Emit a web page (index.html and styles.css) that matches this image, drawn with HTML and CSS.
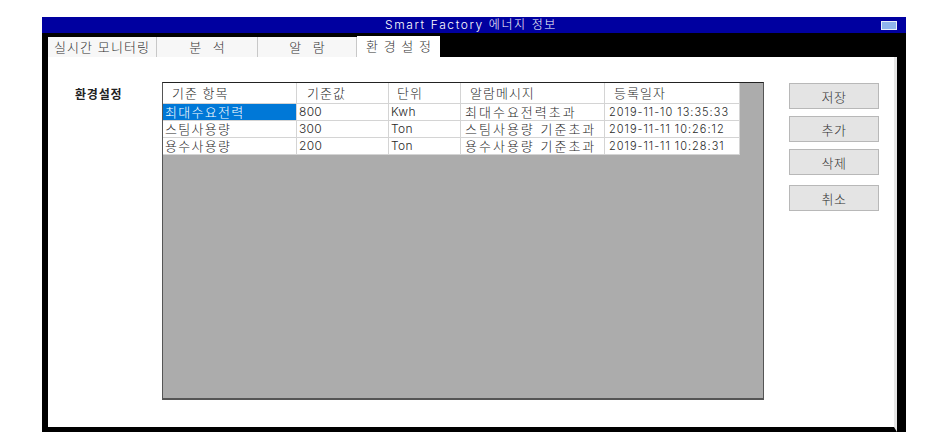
FILE: index.html
```html
<!DOCTYPE html>
<html lang="ko">
<head>
    <meta charset="UTF-8">
    <title>Smart Factory 에너지 정보</title>
    <link rel="stylesheet" href="styles.css">
</head>
<body>
    <div class="window">
        <div class="title-bar">
            <span></span>
            <span class="title">Smart Factory 에너지 정보</span>
            <span class="title-icon"><i></i></span>
        </div>
        <div class="tab-bar">
            <div class="tab tab-monitor">실시간 모니터링</div>
            <div class="tab tab-analysis">분 석</div>
            <div class="tab tab-alarm">알 람</div>
            <div class="tab tab-settings active">환 경 설 정</div>
        </div>
        <div class="content">
            <div class="section-label">환경설정</div>
            <div class="grid-box">
                <div class="grid-row header">
                    <div class="cell">기준 항목</div>
                    <div class="cell">기준값</div>
                    <div class="cell">단위</div>
                    <div class="cell">알람메시지</div>
                    <div class="cell">등록일자</div>
                </div>
                <div class="grid-row">
                    <div class="cell selected">최대수요전력</div>
                    <div class="cell num">800</div>
                    <div class="cell num">Kwh</div>
                    <div class="cell msg">최대수요전력초과</div>
                    <div class="cell date">2019-11-10 13:35:33</div>
                </div>
                <div class="grid-row">
                    <div class="cell">스팀사용량</div>
                    <div class="cell num">300</div>
                    <div class="cell num">Ton</div>
                    <div class="cell msg">스팀사용량 기준초과</div>
                    <div class="cell date">2019-11-11 10:26:12</div>
                </div>
                <div class="grid-row">
                    <div class="cell">용수사용량</div>
                    <div class="cell num">200</div>
                    <div class="cell num">Ton</div>
                    <div class="cell msg">용수사용량 기준초과</div>
                    <div class="cell date">2019-11-11 10:28:31</div>
                </div>
            </div>
            <div class="buttons">
                <button>저장</button>
                <button>추가</button>
                <button>삭제</button>
                <button class="cancel">취소</button>
            </div>
        </div>
    </div>
</body>
</html>
```

FILE: styles.css
```css
* {
    margin: 0;
    padding: 0;
    box-sizing: border-box;
}
body {
    background: #fff;
    font-family: 'Inter', 'Noto Sans CJK KR', sans-serif;
    font-size: 12px;
    font-weight: 300;
    color: #2a2a2a;
}
.window {
    margin: 17px 0 0 42px;
    width: 864px;
    background: #000;
}
.title-bar {
    height: 16px;
    background: #0000a0;
    color: #fff;
    display: grid;
    grid-template-columns: 1fr auto 1fr;
    align-items: center;
}
.title {
    font-size: 12px;
    letter-spacing: 1.6px;
    font-weight: 300;
    line-height: 16px;
    margin-left: -6px;
}
.title-icon {
    justify-self: end;
    margin-right: 9px;
    width: 16px;
    height: 9px;
    margin-top: 1px;
    border: 1px solid #e8eef8;
    background: #8fb4ec;
    display: flex;
}
.tab-bar {
    height: 24px;
    padding-left: 6px;
    display: flex;
    align-items: flex-end;
}
.tab {
    height: 20px;
    background: #f7f7f7;
    border-right: 1px solid #c8c8c8;
    display: flex;
    align-items: center;
    justify-content: center;
    font-size: 13px;
    color: #333;
    line-height: 20px;
}
.tab-monitor {
    width: 109px;
    letter-spacing: 1.1px;
}
.tab-analysis {
    width: 101px;
    word-spacing: 8px;
}
.tab-alarm {
    width: 99px;
    word-spacing: 8px;
}
.tab-settings {
    width: 83px;
    word-spacing: 2px;
}
.tab.active {
    height: 21px;
    background: #fff;
    border-right: none;
    align-items: flex-start;
}
.content {
    height: 375px;
    margin-right: 9px;
    margin-left: 6px;
    border-bottom: 5px solid #000;
    border-right: 3px solid #e6e6e6;
    background: #fff;
    padding: 25px 0 0 27px;
    display: flex;
    align-items: flex-start;
}
.section-label {
    width: 87px;
    padding-top: 3px;
    font-weight: bold;
    font-size: 12px;
    letter-spacing: 0.8px;
    color: #222;
}
.grid-box {
    width: 602px;
    height: 318px;
    background: #acacac;
    border: 1px solid #555;
    border-top: 1px solid #222;
    border-bottom: 2px solid #555;
}
.grid-row {
    display: grid;
    grid-template-columns: 134px 92px 72px 144px 135px;
    height: 17px;
}
.grid-row.header {
    height: 21px;
}
.cell {
    background: #fff;
    border-right: 1px solid #d4d4d4;
    border-bottom: 1px solid #d4d4d4;
    padding-left: 2px;
    font-size: 13px;
    line-height: 16px;
    letter-spacing: 1.3px;
    white-space: nowrap;
    overflow: hidden;
}
.header .cell {
    line-height: 20px;
    padding-left: 9px;
    letter-spacing: 1px;
}
.header .cell:nth-child(2) {
    padding-left: 10px;
}
.header .cell:nth-child(3) {
    padding-left: 8px;
}
.cell.selected {
    background: #0078d7;
    color: #fff;
}
.cell.num {
    font-size: 12px;
    letter-spacing: 0.3px;
}
.cell.msg {
    padding-left: 4px;
    letter-spacing: 2px;
}
.cell.date {
    padding-left: 4px;
    font-size: 11px;
    letter-spacing: 1px;
}
.buttons {
    margin-left: 25px;
    display: flex;
    flex-direction: column;
    gap: 7px;
    padding-top: 1px;
}
.buttons button {
    width: 90px;
    height: 26px;
    background: #e4e4e4;
    border: 1px solid #b8b8b8;
    font-family: 'Noto Sans CJK KR', sans-serif;
    font-weight: 300;
    font-size: 13px;
    color: #333;
    letter-spacing: 0.5px;
}
.buttons button.cancel {
    margin-top: 3px;
}
```
